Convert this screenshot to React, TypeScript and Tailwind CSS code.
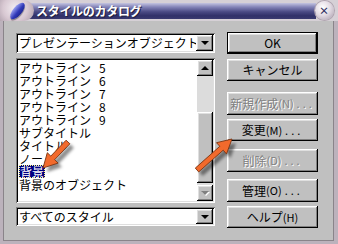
import React from "react";

const raised =
  "shadow-[inset_-1px_-1px_#000,inset_1px_1px_#fff,inset_-2px_-2px_#808080,inset_2px_2px_#dfdfdf]";
const sunken =
  "shadow-[inset_1px_1px_#808080,inset_-1px_-1px_#fff,inset_2px_2px_#000,inset_-2px_-2px_#dfdfdf]";

function arrowPts(x1: number, y1: number, x2: number, y2: number) {
  const shaft = 2.6;
  const headW = 7.5;
  const headL = 14;
  const dx = x2 - x1;
  const dy = y2 - y1;
  const len = Math.hypot(dx, dy);
  const ux = dx / len;
  const uy = dy / len;
  const px = -uy;
  const py = ux;
  const bx = x2 - ux * headL;
  const by = y2 - uy * headL;
  const p = [
    [x1 + px * shaft, y1 + py * shaft],
    [bx + px * shaft, by + py * shaft],
    [bx + px * headW, by + py * headW],
    [x2, y2],
    [bx - px * headW, by - py * headW],
    [bx - px * shaft, by - py * shaft],
    [x1 - px * shaft, y1 - py * shaft],
  ];
  return p.map((q) => q[0].toFixed(1) + "," + q[1].toFixed(1)).join(" ");
}

function Arrow({ x1, y1, x2, y2 }: { x1: number; y1: number; x2: number; y2: number }) {
  return (
    <g>
      <polygon
        points={arrowPts(x1 + 4, y1 + 4, x2 + 4, y2 + 4)}
        fill="rgba(0,0,0,0.45)"
        filter="url(#blur)"
      />
      <polygon
        points={arrowPts(x1, y1, x2, y2)}
        fill="#f26a2c"
        stroke="#7a3412"
        strokeWidth="0.9"
        strokeLinejoin="round"
      />
    </g>
  );
}

function Btn({
  children,
  disabled,
  def,
  h,
  mt,
}: {
  children: React.ReactNode;
  disabled?: boolean;
  def?: boolean;
  h: string;
  mt: string;
}) {
  return (
    <div
      className={
        "flex items-center justify-center whitespace-nowrap bg-[#c0c0c0] text-[12px] leading-none " +
        h +
        " " +
        mt +
        " " +
        (def ? "border border-black " : "") +
        raised +
        " " +
        (disabled ? "text-[#808080] [text-shadow:1px_1px_#fff]" : "text-black")
      }
    >
      {children}
    </div>
  );
}

function Mn({ k }: { k: string }) {
  return <span className="text-[11px] tracking-[0px]">({k})</span>;
}

function Dots() {
  return <span className="tracking-[3px] ml-[3px] text-[11px]">...</span>;
}

function DropBtn() {
  return (
    <div className={"w-[17px] h-full flex items-center justify-center bg-[#c0c0c0] " + raised}>
      <div className="w-0 h-0 border-l-[4px] border-r-[4px] border-t-[4px] border-l-transparent border-r-transparent border-t-black" />
    </div>
  );
}

const items: [string, string][] = [
  ["アウトライン", "5"],
  ["アウトライン", "6"],
  ["アウトライン", "7"],
  ["アウトライン", "8"],
  ["アウトライン", "9"],
  ["サブタイトル", ""],
  ["タイトル", ""],
  ["ノート", ""],
  ["背景", ""],
  ["背景のオブジェクト", ""],
];

export default function App() {
  return (
    <div className="relative w-[338px] h-[244px] overflow-hidden bg-[#c0c0c0] font-['Noto_Sans_CJK_JP','Liberation_Sans',sans-serif] flex flex-col">
      {/* title bar */}
      <div className="h-[21px] flex items-stretch bg-[#d6d0d6]">
        <div className="w-[34px] h-[21px] rounded-r-full bg-[radial-gradient(circle_at_45%_40%,#f4eef2_0%,#d8c8d2_55%,#a89aa6_100%)] flex items-center justify-center z-10">
          <div className="w-[9px] h-[20px] rounded-[50%] rotate-[40deg] bg-[linear-gradient(to_right,#9aa0f0,#3038b8_60%,#202890)] shadow-[1px_1px_1px_rgba(0,0,0,0.4)]" />
        </div>
        <div className="flex-1 -ml-[10px] mt-[3px] mb-[2px] pl-[12px] flex items-center bg-[linear-gradient(to_bottom,#c4c4e0_0%,#8484b8_25%,#4a4a84_55%,#303068_80%,#3a3a70_100%)]">
          <span className="text-white font-bold text-[12px] leading-none tracking-[-0.3px] [text-shadow:1px_1px_#202040]">
            スタイルのカタログ
          </span>
        </div>
        <div className="w-[28px] -ml-[6px] flex items-center justify-center">
          <div className="w-[19px] h-[19px] rounded-full bg-[radial-gradient(circle_at_40%_35%,#ffffff_0%,#e4dce4_45%,#a498a8_100%)] flex items-center justify-center text-[#303060] text-[10px] font-bold leading-none shadow-[0_0_0_1px_#b0a4b0]">
            ×
          </div>
        </div>
      </div>

      {/* body */}
      <div className="flex-1 border-l-[3px] border-r-[4px] border-b-[3px] border-[#bcb2bc]">
        <div className="h-full border-l border-r border-b border-[#8a848a] flex pl-[12px] pt-[11px]">
          {/* left column */}
          <div className="w-[199px] flex flex-col">
            <div className={"mt-[1px] h-[20px] bg-white flex items-stretch p-[2px] " + sunken}>
              <div className="flex-1 text-[12px] leading-[16px] pl-[1px] overflow-hidden whitespace-nowrap text-black">
                プレゼンテーションオブジェクト
              </div>
              <DropBtn />
            </div>
            <div className={"mt-[5px] h-[145px] bg-white flex p-[2px] " + sunken}>
              <div className="flex-1 pt-[1px] pl-[1px] text-[12px] text-black">
                {items.map(([t, n]) => (
                  <div key={t + n} className="h-[13px] leading-[13px] whitespace-nowrap flex">
                    {t === "背景" ? (
                      <span className="bg-[#000080] text-white border border-dotted border-[#ffff80] leading-[11px]">
                        {t}
                      </span>
                    ) : (
                      <span>
                        {t}
                        {n && <span className="ml-[8px]">{n}</span>}
                      </span>
                    )}
                  </div>
                ))}
              </div>
              {/* scrollbar */}
              <div className="w-[16px] flex flex-col">
                <div className={"h-[16px] flex items-center justify-center bg-[#c0c0c0] " + raised}>
                  <div className="w-0 h-0 border-l-[4px] border-r-[4px] border-b-[4px] border-l-transparent border-r-transparent border-b-black" />
                </div>
                <div className="h-[36px] bg-[#dcdcdc]" />
                <div className={"flex-1 bg-[#c0c0c0] " + raised} />
                <div className="h-[2px] bg-[#dcdcdc]" />
                <div className={"h-[16px] flex items-center justify-center bg-[#c0c0c0] " + raised}>
                  <div className="w-0 h-0 border-l-[4px] border-r-[4px] border-t-[4px] border-l-transparent border-r-transparent border-t-[#808080] [filter:drop-shadow(1px_1px_0_#fff)]" />
                </div>
              </div>
            </div>
            <div className={"mt-[4px] h-[19px] bg-white flex items-stretch p-[2px] " + sunken}>
              <div className="flex-1 text-[12px] leading-[15px] pl-[1px] overflow-hidden whitespace-nowrap text-black">
                すべてのスタイル
              </div>
              <DropBtn />
            </div>
          </div>

          {/* right column */}
          <div className="ml-[12px] w-[91px] flex flex-col">
            <Btn def h="h-[22px]" mt="mt-0">OK</Btn>
            <Btn h="h-[22px]" mt="mt-[5px]">キャンセル</Btn>
            <Btn disabled h="h-[23px]" mt="mt-[11px]">
              新規作成<Mn k="N" />
              <Dots />
            </Btn>
            <Btn h="h-[22px]" mt="mt-[4px]">
              変更<Mn k="M" />
              <Dots />
            </Btn>
            <Btn disabled h="h-[23px]" mt="mt-[8px]">
              削除<Mn k="D" />
              <Dots />
            </Btn>
            <Btn h="h-[23px]" mt="mt-[7px]">
              管理<Mn k="O" />
              <Dots />
            </Btn>
            <Btn h="h-[22px]" mt="mt-[4px]">
              ヘルプ<Mn k="H" />
            </Btn>
          </div>
        </div>
      </div>

      {/* annotation arrows */}
      <svg className="absolute inset-0 pointer-events-none" width="338" height="244">
        <defs>
          <filter id="blur" x="-20%" y="-20%" width="140%" height="140%">
            <feGaussianBlur stdDeviation="1.8" />
          </filter>
        </defs>
        <Arrow x1={68} y1={142} x2={43} y2={168} />
        <Arrow x1={197} y1={170} x2={232} y2={139} />
      </svg>
    </div>
  );
}
